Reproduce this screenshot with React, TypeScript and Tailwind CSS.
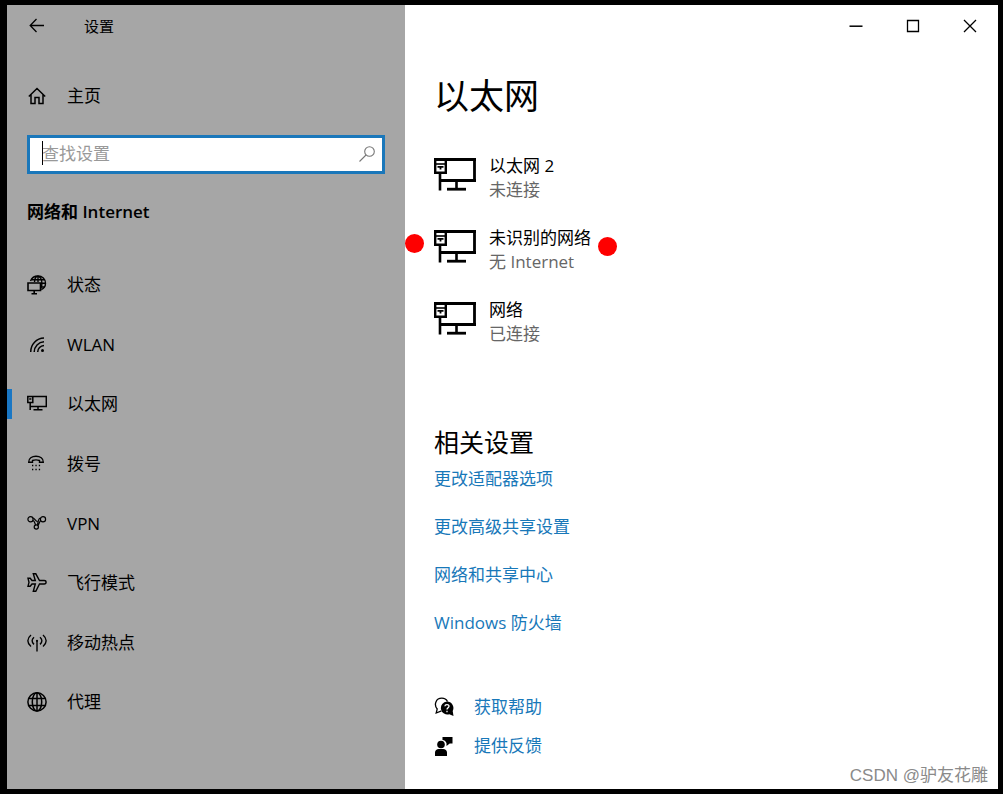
import type { ReactNode } from "react";

const stroke = { fill: "none", stroke: "currentColor" } as const;

function Glyph({ children, width = 1.4 }: { children: ReactNode; width?: number }) {
  return (
    <svg viewBox="0 0 20 20" className="size-5 shrink-0" strokeWidth={width} aria-hidden="true" {...stroke}>
      {children}
    </svg>
  );
}

const BackIcon = () => (
  <Glyph width={1.3}>
    <path d="M17 9.500H3.500M9.500 3 3.200 9.500l6.300 6.500" />
  </Glyph>
);

const HomeIcon = () => (
  <Glyph width={1.5}>
    <path d="M1.800 10.500 10 2.500l8.200 8M4 8.800V17.500h4v-6h4v6h4V8.800" />
  </Glyph>
);

const StatusIcon = () => (
  <Glyph width={1.4}>
    <path d="M3.500 6C4.700 3 7.500 1 11 1c4.200 0 7.500 3.200 7.500 7.300 0 3-1.700 5.300-4.200 6.400" />
    <path d="M7.500 7C7.700 3.500 9.200 1.200 11 1.200s3.900 3 3.900 7.100c0 2.100-.4 3.900-1 5.200M11 1v6M4.500 4.700h13M14 8.300h4.500M14 12h3.500" />
    <path d="M1 8h12.500v7.500H1zM7.200 15.500v3M4.500 18.700h5.500" strokeWidth="1.600" />
  </Glyph>
);

const WlanIcon = () => (
  <Glyph width={1.5}>
    <path d="M3.700 18C3.700 10.500 9.500 4.300 17 4.100M7.200 18C7.200 12.500 11.500 8 17 7.800M10.700 18c0-3.500 2.800-6.300 6.300-6.500" />
    <circle cx="15.500" cy="16.500" r="1.500" fill="currentColor" stroke="none" />
  </Glyph>
);

const EthernetIcon = () => (
  <Glyph width={1.5}>
    <path d="M.8 2.500h5v6h-5zM5.800 2.500h13.500v10H3.200M3.200 8.500v7.500M11 12.500v3.300M6.500 15.700h9M2.200 5h2.200" />
  </Glyph>
);

const DialIcon = () => (
  <Glyph width={1.4}>
    <path d="M1.700 8.200C1.300 4.200 5.100 2.200 9 2.200s7.700 2 7.300 6h-3.800V6.500c-2.200-.8-4.800-.8-7 0v1.700z" />
    <path d="M5 11.500h1.300M8.400 11.500h1.300M11.800 11.500h1.300M5 15.500h1.300M8.400 15.500h1.300M11.800 15.500h1.300" />
  </Glyph>
);

const VpnIcon = () => (
  <Glyph width={1.2}>
    <circle cx="3.500" cy="6.200" r="2.600" />
    <circle cx="16" cy="6.200" r="2.600" />
    <circle cx="9.300" cy="14" r="2.100" />
    <path d="M5.800 5c2.200 0 2.700 3.800 4.600 3.400M6 7.500c1.600.6 1.800 2.700 2.600 4.400M13.700 5C11 5 11.500 8.500 10.300 11.900M13.700 7.500c-1.200.7-1.400 3-2.700 5" />
  </Glyph>
);

const PlaneIcon = () => (
  <Glyph width={1.4}>
    <path d="M1 5.300h2.200L5 7.500h3.300L6.300.800h2.500L12.500 7.500h4.700c2.500 0 2.500 3.500 0 3.500h-4.700l-3.700 7.200H6.300L8.300 11H5l-1.800 2.300H1l1-4z" />
  </Glyph>
);

const HotspotIcon = () => (
  <Glyph width={1.4}>
    <path d="M4 2C-.2 5.500-.2 10 4 13.500M7 4.200c-2.500 2.200-2.500 5 0 7.200M16 2c4.200 3.500 4.200 8 0 11.500M13 4.200c2.500 2.200 2.500 5 0 7.200M10 8v10.500" />
    <circle cx="10" cy="7.800" r="1.100" fill="currentColor" stroke="none" />
  </Glyph>
);

const ProxyIcon = () => (
  <Glyph width={1.5}>
    <circle cx="10" cy="9.900" r="9.100" />
    <ellipse cx="10" cy="9.900" rx="4.700" ry="9.100" />
    <path d="M10 .9v18M2 6.500h16M2 13.500h16" />
  </Glyph>
);

const SearchIcon = () => (
  <Glyph width={1.1}>
    <circle cx="12.500" cy="7.500" r="4.800" />
    <path d="M9 11 2.500 17.500" />
  </Glyph>
);

const AdapterIcon = () => (
  <svg viewBox="0 0 43 34" className="h-[34px] w-[43px] shrink-0" aria-hidden="true" {...stroke}>
    <path d="M0 1.500h42M40.500 1.500v22M6 22.500h36" strokeWidth="2.800" />
    <path d="M1.200 1v13.700h10.600V1" strokeWidth="2.400" />
    <path d="M2 6h9" strokeWidth="1.600" />
    <path d="M3.500 8.800h6M6.500 8.800v2.700" strokeWidth="1.800" />
    <path d="M6 14v18.500M22.500 23v7" strokeWidth="2.600" />
    <path d="M13 31.200h19" strokeWidth="2.800" />
  </svg>
);

const HelpIcon = () => (
  <Glyph width={1.3}>
    <path d="M7.500 13.800 2.200 16l1-4C-.5 7.500 2 1.200 7.800 1.200c2.700 0 4.700 1.300 5.700 3.300" />
    <path d="M13 4.500a6.500 6.500 0 0 1 5.700 9.500l.8 5-4.200-1.800A6.500 6.500 0 1 1 13 4.500z" fill="currentColor" stroke="none" />
    <path d="M10.900 9.300c.1-2.400 4.200-2.300 4.100 0-.1 1.500-2 1.500-2 3.300M13 13.700v1.500" stroke="#fff" />
  </Glyph>
);

const FeedbackIcon = () => (
  <Glyph>
    <g fill="currentColor" stroke="none">
      <circle cx="7" cy="8.500" r="3.800" />
      <path d="M1 20v-3.500C1 14.300 2.800 13 4.800 13h4.400c2 0 3.800 1.300 3.800 3.500V20zM8.500 1h10v6.500h-2.800L12.500 10V7.300C12 5 10.500 4 8.500 3.900z" />
    </g>
  </Glyph>
);

const navItems = [
  { label: "状态", icon: <StatusIcon /> },
  { label: "WLAN", icon: <WlanIcon /> },
  { label: "以太网", icon: <EthernetIcon />, active: true },
  { label: "拨号", icon: <DialIcon /> },
  { label: "VPN", icon: <VpnIcon /> },
  { label: "飞行模式", icon: <PlaneIcon /> },
  { label: "移动热点", icon: <HotspotIcon /> },
  { label: "代理", icon: <ProxyIcon /> },
];

const networks = [
  { name: "以太网 2", state: "未连接" },
  { name: "未识别的网络", state: "无 Internet", marked: true },
  { name: "网络", state: "已连接" },
];

const relatedLinks = ["更改适配器选项", "更改高级共享设置", "网络和共享中心", "Windows 防火墙"];

const supportLinks = [
  { label: "获取帮助", icon: <HelpIcon /> },
  { label: "提供反馈", icon: <FeedbackIcon /> },
];

function Sidebar() {
  return (
    <aside className="w-[398px] shrink-0 bg-[#a6a6a6]">
      <header className="flex h-[42px] items-center gap-[37px] pl-5">
        <button type="button" aria-label="返回">
          <BackIcon />
        </button>
        <span className="text-[15px]">设置</span>
      </header>
      <a href="#home" className="mt-[31px] flex h-9 items-center gap-5 pl-5">
        <HomeIcon />
        <span>主页</span>
      </a>
      <div className="relative mt-[21px] mr-5 ml-5">
        <input
          type="text"
          aria-label="查找设置"
          placeholder="查找设置"
          className="block h-[39px] w-full border-[3px] border-[#1a77ba] bg-white pr-10 pb-[2px] pl-3 outline-none placeholder:text-[#999999]"
        />
        <span className="absolute top-[6px] left-[15px] h-6 w-px bg-black" />
        <span className="absolute top-[9px] right-[8px] text-[#777777]">
          <SearchIcon />
        </span>
      </div>
      <h2 className="mt-[26px] pl-5 leading-6 font-semibold">网络和 Internet</h2>
      <nav className="mt-[31px] grid h-[477px] auto-rows-fr">
        {navItems.map((item) => (
          <a key={item.label} href="#" className="relative flex items-center gap-5 pl-5">
            {item.active && <span className="absolute left-0 h-[30px] w-[5px] bg-[#1a77c4]" />}
            {item.icon}
            <span>{item.label}</span>
          </a>
        ))}
      </nav>
    </aside>
  );
}

function WindowControls() {
  return (
    <div className="flex h-[42px] justify-end">
      <button type="button" aria-label="最小化" className="flex w-[57px] items-center justify-center">
        <svg viewBox="0 0 14 14" className="size-[14px]" strokeWidth="1.500" {...stroke}>
          <path d="M0.500 7.200h13" />
        </svg>
      </button>
      <button type="button" aria-label="最大化" className="flex w-[57px] items-center justify-center">
        <svg viewBox="0 0 14 14" className="size-[14px]" strokeWidth="1.300" {...stroke}>
          <path d="M1.500 1.500h11v11h-11z" />
        </svg>
      </button>
      <button type="button" aria-label="关闭" className="flex w-[57px] items-center justify-center">
        <svg viewBox="0 0 14 14" className="size-[14px]" strokeWidth="1.300" {...stroke}>
          <path d="m1 1 12 12M13 1 1 13" />
        </svg>
      </button>
    </div>
  );
}

export default function App() {
  return (
    <div className="flex min-h-screen bg-black pt-[5px] pr-[5px] pb-[5px] pl-[7px] font-['Open_Sans','Noto_Sans_CJK_SC',sans-serif] text-[17px] text-black">
      <Sidebar />
      <main className="relative min-w-0 grow bg-white">
        <WindowControls />
        <div className="pl-[29px]">
          <h1 className="mt-6 text-[35px] leading-[50px]">以太网</h1>
          <ul className="mt-[33px] grid gap-6">
            {networks.map((net) => (
              <li key={net.name} className="flex">
                <a href="#" className="relative flex items-center gap-3 leading-6">
                  <span className="flex h-12 items-start pt-1">
                    <AdapterIcon />
                  </span>
                  <span className="grid">
                    <span>{net.name}</span>
                    <span className="text-[#666666]">{net.state}</span>
                  </span>
                  {net.marked && (
                    <>
                      <span className="absolute top-2 -left-[29px] size-[19px] rounded-full bg-[#fe0000]" />
                      <span className="absolute top-[11px] -right-[26px] size-[19px] rounded-full bg-[#fe0000]" />
                    </>
                  )}
                </a>
              </li>
            ))}
          </ul>
          <h2 className="mt-20 text-[25px] leading-8">相关设置</h2>
          <ul className="mt-[9px] grid gap-6 leading-6 text-[#1878b9]">
            {relatedLinks.map((label) => (
              <li key={label}>
                <a href="#">{label}</a>
              </li>
            ))}
          </ul>
          <ul className="mt-[60px] grid gap-[15px] leading-6">
            {supportLinks.map((link) => (
              <li key={link.label}>
                <a href="#" className="flex items-center gap-5 text-[#1878b9]">
                  <span className="text-black">{link.icon}</span>
                  <span>{link.label}</span>
                </a>
              </li>
            ))}
          </ul>
        </div>
        <span className="absolute right-[10px] bottom-[1px] font-['Liberation_Sans','Noto_Sans_CJK_SC',sans-serif] text-[17px] leading-6 text-[#8a8a8a]">
          CSDN @驴友花雕
        </span>
      </main>
    </div>
  );
}
